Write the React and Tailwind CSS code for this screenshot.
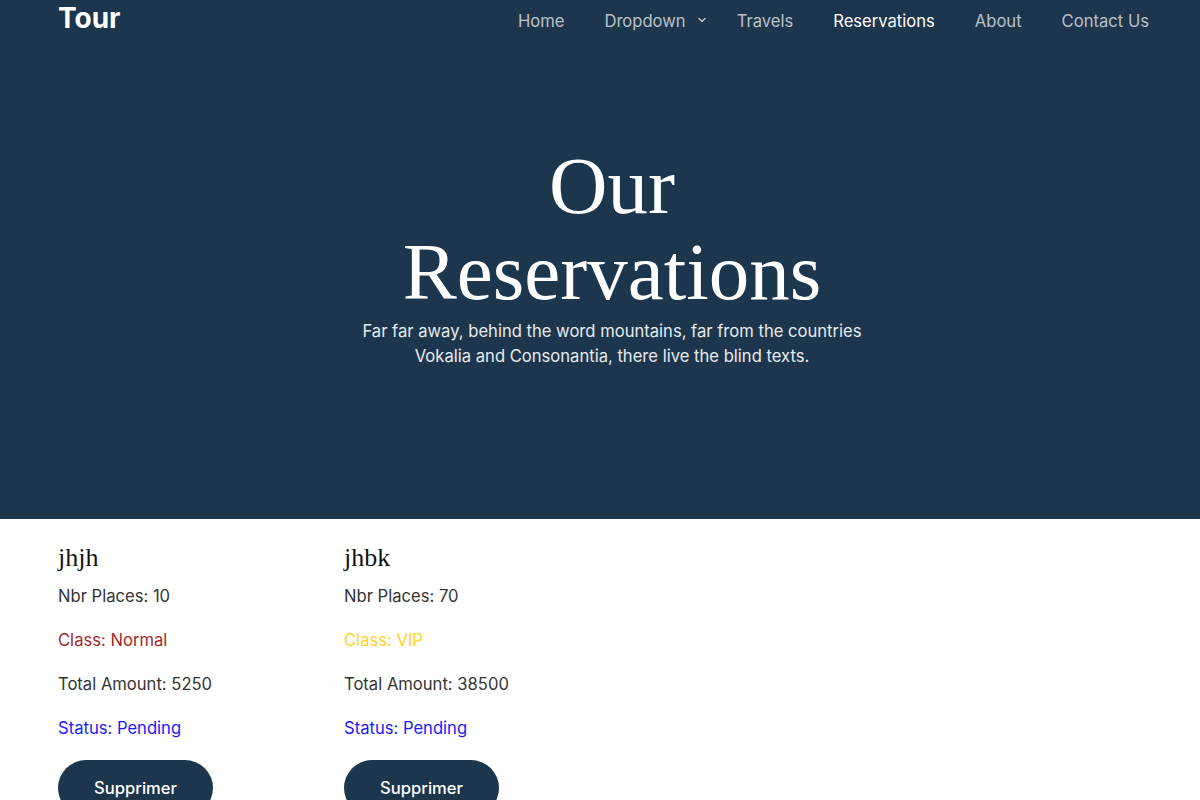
import { ChevronDown } from 'lucide-react'

const NAV = ['Home', 'Dropdown', 'Travels', 'Reservations', 'About', 'Contact Us']

const RESERVATIONS = [
  { name: 'jhjh', places: 10, cls: 'Normal', total: 5250, status: 'Pending' },
  { name: 'jhbk', places: 70, cls: 'VIP', total: 38500, status: 'Pending' },
]

export default function App() {
  return (
    <div className="min-h-screen bg-white font-['Inter',sans-serif]">
      {/* Hero */}
      <section className="h-[519px] bg-[#1c364d] flex flex-col">
        <nav className="flex items-center justify-between pl-[58px] pr-[31px] h-[43px]">
          <a className="text-[28px] font-bold text-white leading-none -mt-[8px]">Tour</a>
          <ul className="flex items-center text-[16.6px] text-white/70">
            {NAV.map(item => (
              <li
                key={item}
                className={
                  'flex items-center px-[20px] ' +
                  (item === 'Reservations' ? 'text-white' : '')
                }
              >
                {item}
                {item === 'Dropdown' && (
                  <ChevronDown size={12} strokeWidth={3} className="ml-[10px] -mr-[11px] mt-[-2px]" />
                )}
              </li>
            ))}
          </ul>
        </nav>

        <div className="flex flex-col items-center text-center mt-[100px] pl-[24px]">
          <h1 className="font-['Liberation_Serif',serif] text-white text-[81px] leading-[86px] w-[440px]">
            Our Reservations
          </h1>
          <p className="mt-[4px] w-[520px] text-[16.6px] leading-[25px] text-white/90">
            Far far away, behind the word mountains, far from the countries Vokalia and Consonantia, there live the blind texts.
          </p>
        </div>
      </section>

      {/* Reservations */}
      <section className="flex pl-[58px] pt-[24px]">
        {RESERVATIONS.map(r => (
          <div key={r.name} className="w-[286px] flex flex-col text-[16.6px] text-[#333]">
            <h3 className="font-['Liberation_Serif',serif] text-[26px] leading-[30px] text-[#111]">{r.name}</h3>
            <p className="mt-[11px] leading-[24px]">Nbr Places: {r.places}</p>
            <p className={'mt-[20px] leading-[24px] ' + (r.cls === 'VIP' ? 'text-[#ffd21f]' : 'text-[#a52a2a]')}>
              Class: {r.cls}
            </p>
            <p className="mt-[20px] leading-[24px]">Total Amount: {r.total}</p>
            <p className="mt-[20px] leading-[24px] text-[#1a1aff]">Status: {r.status}</p>
            <button className="mt-[20px] w-[155px] h-[56px] rounded-full bg-[#1c364d] text-white text-[16.6px] font-medium">
              Supprimer
            </button>
          </div>
        ))}
      </section>
    </div>
  )
}
